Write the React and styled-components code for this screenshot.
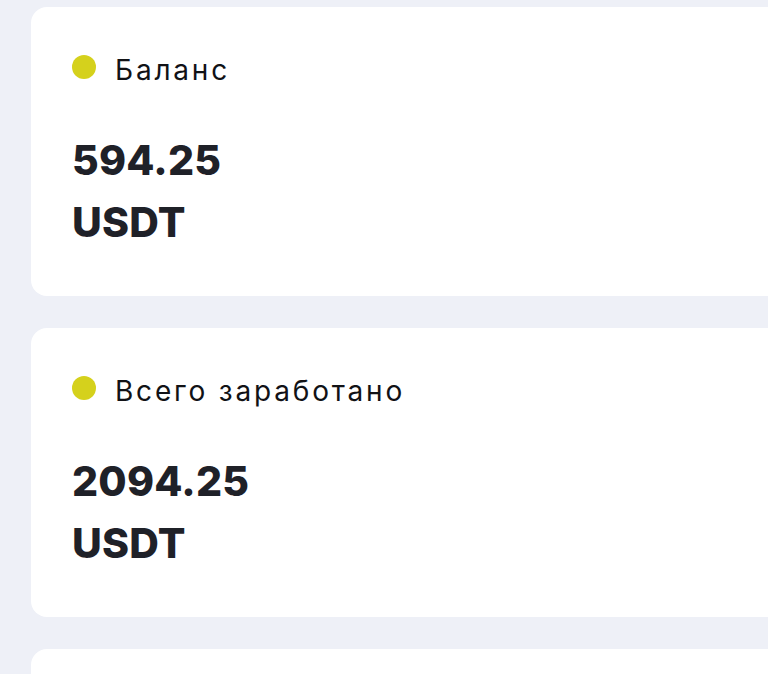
import React from "react";
import styled, { createGlobalStyle } from "styled-components";

const GlobalStyle = createGlobalStyle`
  html, body {
    margin: 0;
    padding: 0;
    background: #eef0f7;
  }
  body {
    font-family: Inter, "Noto Sans", sans-serif;
    color: #1f2128;
  }
`;

const Page = styled.div`
  width: 768px;
  height: 674px;
  overflow: hidden;
  box-sizing: border-box;
  padding: 7px 0 0 31px;
  display: flex;
  flex-direction: column;
  gap: 32px;
`;

const Card = styled.div`
  flex: none;
  width: 760px;
  height: 289px;
  box-sizing: border-box;
  padding: 46px 0 0 41px;
  background: #ffffff;
  border-radius: 16px;
`;

const LabelRow = styled.div`
  display: flex;
  align-items: flex-start;
  gap: 19px;
`;

const Dot = styled.span`
  width: 24px;
  height: 24px;
  margin-top: 2px;
  border-radius: 50%;
  background: ${p => p.color || "#d5d11c"};
  flex: none;
`;

const Label = styled.span`
  font-size: 28px;
  line-height: 34px;
  font-weight: 400;
  letter-spacing: 2.8px;
  color: #111216;
`;

const Amount = styled.div`
  margin-top: 42px;
  font-size: 41px;
  font-weight: 800;
  line-height: 62px;
  letter-spacing: 0.2px;
  color: #1f2128;
`;

const cards = [
  { label: "Баланс", value: "594.25" },
  { label: "Всего заработано", value: "2094.25" },
  { label: "", value: "" }
];

export default function App() {
  return (
    <>
      <GlobalStyle />
      <Page>
        {cards.map((c, i) => (
          <Card key={i}>
            {c.label && (
              <>
                <LabelRow>
                  <Dot />
                  <Label>{c.label}</Label>
                </LabelRow>
                <Amount>
                  {c.value}
                  <br />
                  USDT
                </Amount>
              </>
            )}
          </Card>
        ))}
      </Page>
    </>
  );
}
